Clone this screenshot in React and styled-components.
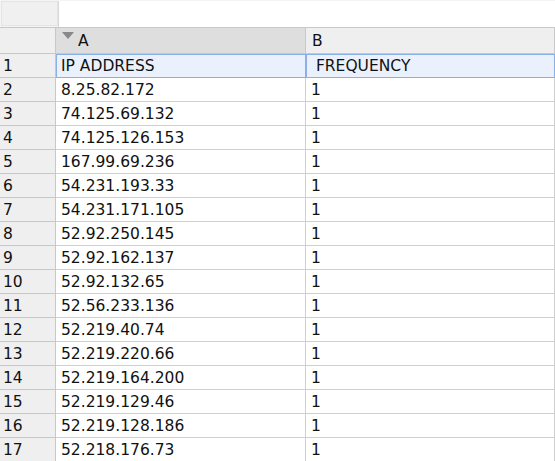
import React from 'react';
import styled, { createGlobalStyle } from 'styled-components';

const Global = createGlobalStyle`
  body { margin: 0; background: #fff; font-family: "DejaVu Sans", sans-serif; }
`;

const rows = [
  ['IP ADDRESS', ' FREQUENCY'],
  ['8.25.82.172', '1'], ['74.125.69.132', '1'], ['74.125.126.153', '1'],
  ['167.99.69.236', '1'], ['54.231.193.33', '1'], ['54.231.171.105', '1'],
  ['52.92.250.145', '1'], ['52.92.162.137', '1'], ['52.92.132.65', '1'],
  ['52.56.233.136', '1'], ['52.219.40.74', '1'], ['52.219.220.66', '1'],
  ['52.219.164.200', '1'], ['52.219.129.46', '1'], ['52.219.128.186', '1'],
  ['52.218.176.73', '1'],
];

const Page = styled.div`
  width: 555px; height: 461px; overflow: hidden;
`;
const FormulaBar = styled.div`
  display: flex; height: 28px; box-sizing: border-box;
  padding: 1px 0 0 1px; border-bottom: 1px solid #c8c8c8; background: #f4f4f4;
`;
const NameBox = styled.div`
  width: 57px; height: 25px; background: #f0f0f0; border: 1px solid #e4e4e4; box-sizing: border-box;
`;
const Input = styled.div`
  flex: 1; height: 26px; background: #fff; border-left: 1px solid #d8d8d8;
`;
const Grid = styled.div`
  display: grid; grid-template-columns: 56px 250px 249px; grid-template-rows: 26px; grid-auto-rows: 24px;
`;
const Cell = styled.div`
  box-sizing: border-box; font-size: 15.5px; color: #111; line-height: 24px;
  padding-left: 5px; white-space: pre; overflow: hidden;
  border-right: 1px solid #cfcfcf; border-bottom: 1px solid #cfcfcf;
  background: ${p => p.$sel ? '#eaf1fd' : '#fff'};
  ${p => p.$sel && 'outline: 1px solid #8ab0e8; outline-offset: -1px;'}
`;
const RowHead = styled(Cell)`
  background: #efefef; padding-left: 3px; border-color: #c8c8c8;
`;
const ColHead = styled(Cell)`
  background: ${p => p.$active ? '#dedede' : '#efefef'}; border-color: #c8c8c8;
  display: flex; align-items: flex-end; padding-left: 6px; line-height: 24px;
`;
const Arrow = styled.span`
  display: inline-block; width: 0; height: 0; margin: 0 4px 14px 0;
  border-left: 6px solid transparent; border-right: 6px solid transparent; border-top: 7px solid #888;
`;

export default function App() {
  return (
    <Page>
      <Global />
      <FormulaBar><NameBox /><Input /></FormulaBar>
      <Grid>
        <RowHead />
        <ColHead $active><Arrow />A</ColHead>
        <ColHead>B</ColHead>
        {rows.map((r, i) => (
          <React.Fragment key={i}>
            <RowHead>{i + 1}</RowHead>
            <Cell $sel={i === 0}>{r[0]}</Cell>
            <Cell $sel={i === 0}>{r[1]}</Cell>
          </React.Fragment>
        ))}
      </Grid>
    </Page>
  );
}
